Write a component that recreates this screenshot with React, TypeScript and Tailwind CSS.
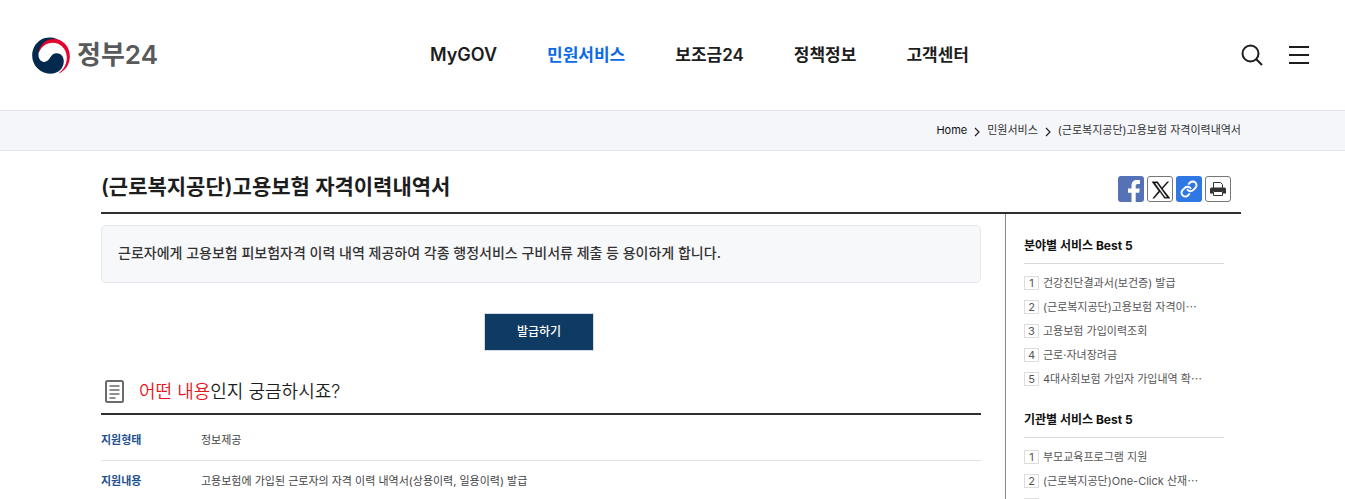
import { ReactNode } from 'react';

const navItems = [
  { label: 'MyGOV', size: 'text-[18px]', active: false },
  { label: '민원서비스', size: 'text-[17px]', active: true },
  { label: '보조금24', size: 'text-[17px]', active: false },
  { label: '정책정보', size: 'text-[17px]', active: false },
  { label: '고객센터', size: 'text-[17px]', active: false },
];

const details = [
  { term: '지원형태', text: '정보제공' },
  { term: '지원내용', text: '고용보험에 가입된 근로자의 자격 이력 내역서(상용이력, 일용이력) 발급' },
];

const fieldServices = [
  '건강진단결과서(보건증) 발급',
  '(근로복지공단)고용보험 자격이⋯',
  '고용보험 가입이력조회',
  '근로·자녀장려금',
  '4대사회보험 가입자 가입내역 확⋯',
];

const agencyServices = [
  '부모교육프로그램 지원',
  '(근로복지공단)One-Click 산재⋯',
  '(근로복지공단)고용보험 자격이⋯',
];

function Emblem() {
  return (
    <svg viewBox="0 0 112 110" className="h-[37px] w-[38px]" aria-hidden="true">
      <path
        d="M92 19C77 3 57 -2 38 3C15 10 0 31 0 55C0 85 24 109 54 109C77 109 94 94 94 72C94 57 85 48 73 48C63 48 58 54 53 62C48 71 41 75 34 74C24 72 18 63 19 50C22 31 38 13 61 10C73 9 83 12 92 19Z"
        fill="#03294f"
      />
      <path
        d="M19 48C22 24 40 6 63 6C92 6 112 29 112 57C112 81 99 100 78 109C95 96 104 78 103 59C101 34 84 17 61 17C42 17 27 29 19 48Z"
        fill="#e4032e"
      />
    </svg>
  );
}

function Chevron() {
  return (
    <svg viewBox="0 0 6 10" className="mt-[2px] h-[10px] w-[6px]" fill="none" stroke="#222" strokeWidth="1.2" aria-hidden="true">
      <path d="M1 1l4 4-4 4" />
    </svg>
  );
}

function ShareButton({ label, className, children }: { label: string; className: string; children: ReactNode }) {
  return (
    <button
      type="button"
      aria-label={label}
      className={`flex h-[26px] w-[26px] items-center justify-center overflow-hidden rounded-[3px] ${className}`}
    >
      {children}
    </button>
  );
}

function BestList({ title, items }: { title: string; items: string[] }) {
  return (
    <section>
      <h3 className="border-b border-[#d8d8d8] pb-[7px] text-[12px] leading-[20px] font-bold text-[#111]">{title}</h3>
      <ol className="mt-[7px]">
        {items.map((item, i) => (
          <li key={item} className="flex h-[24px] items-center gap-[4px] text-[11px] text-[#555]">
            <span className="flex h-[14px] w-[15px] shrink-0 items-center justify-center border border-[#ddd] leading-[12px]">
              {i + 1}
            </span>
            <a href="#" className="whitespace-nowrap">
              {item}
            </a>
          </li>
        ))}
      </ol>
    </section>
  );
}

export default function App() {
  return (
    <div className="h-screen overflow-hidden bg-white font-['Inter','Noto_Sans_CJK_KR',sans-serif] text-[#1d1d1d]">
      <header className="flex h-[110px] items-center justify-between pr-[36px] pl-[32px]">
        <a href="#" className="flex items-center gap-[7px]">
          <Emblem />
          <span className="text-[26px] leading-[36px] font-semibold text-[#58595b]">정부24</span>
        </a>
        <nav className="flex items-center gap-[50px]">
          {navItems.map((item) => (
            <a
              key={item.label}
              href="#"
              className={`leading-[26px] font-semibold ${item.size} ${item.active ? 'text-[#0b6be6]' : 'text-[#1d1d1d]'}`}
            >
              {item.label}
            </a>
          ))}
        </nav>
        <div className="flex items-center gap-[26px]">
          <button type="button" aria-label="검색">
            <svg viewBox="0 0 22 22" className="h-[22px] w-[22px]" fill="none" stroke="#1d1d1d" strokeWidth="2" aria-hidden="true">
              <circle cx="9.5" cy="9.5" r="8" />
              <path d="M15.3 15.3L21 21" />
            </svg>
          </button>
          <button type="button" aria-label="전체메뉴">
            <svg viewBox="0 0 20 20" className="h-[20px] w-[20px]" fill="#1d1d1d" aria-hidden="true">
              <path d="M0 1h20v2H0zM0 9h20v2H0zM0 17h20v2H0z" />
            </svg>
          </button>
        </div>
      </header>

      <div className="border-y border-[#e2e4ea] bg-[#f5f6fa] pr-[3px]">
        <nav className="mx-auto flex h-[39px] max-w-[1140px] items-center justify-end gap-[7px] text-[11px] text-[#333]">
          <a href="#" className="text-[#111]">
            Home
          </a>
          <Chevron />
          <a href="#">민원서비스</a>
          <Chevron />
          <span>(근로복지공단)고용보험 자격이력내역서</span>
        </nav>
      </div>

      <div className="pr-[3px]">
        <div className="mx-auto max-w-[1140px]">
          <div className="flex h-[63px] items-center justify-between border-b-2 border-[#2f2f33] pt-[10px] pr-[10px]">
            <h1 className="text-[21px] leading-[30px] font-semibold">(근로복지공단)고용보험 자격이력내역서</h1>
            <div className="flex gap-[3px] pt-[5px]">
              <ShareButton label="페이스북" className="bg-[#5472b5]">
                <svg viewBox="0 0 26 26" className="h-[26px] w-[26px]" fill="#fff" aria-hidden="true">
                  <path d="M13.5 26v-9.2H10v-4.2h3.5V9.8c0-3.9 2.2-5.8 5.4-5.8h3v4h-2c-1.6 0-2.2.7-2.2 2.1v2.5h4.1l-.6 4.2h-3.5V26z" />
                </svg>
              </ShareButton>
              <ShareButton label="X" className="border border-[#777] bg-white">
                <svg viewBox="0 0 24 24" className="mt-[2px] ml-[2px] h-[18px] w-[18px]" fill="#111" aria-hidden="true">
                  <path d="M14.1 10.3L22.3 1h-2l-7.1 8.1L7.5 1H0l9 12.2L1 23h2l7.5-8.6L16.5 23H24zm-2.700 3l-.9-1.200L3.700 2.500h2.900l5.600 7.800.9 1.200 7.300 10.100h-3z" stroke="#111" strokeWidth="0.5" />
                </svg>
              </ShareButton>
              <ShareButton label="링크 복사" className="bg-[#2f78e4]">
                <svg
                  viewBox="0 0 24 24"
                  className="h-[18px] w-[18px]"
                  fill="none"
                  stroke="#fff"
                  strokeWidth="2.7"
                  strokeLinecap="round"
                  aria-hidden="true"
                >
                  <path d="M10 13a5 5 0 0 0 7.540.540l3-3a5 5 0 0 0-7.070-7.070l-1.720 1.710" />
                  <path d="M14 11a5 5 0 0 0-7.540-.540l-3 3a5 5 0 0 0 7.070 7.070l1.710-1.710" />
                </svg>
              </ShareButton>
              <ShareButton label="인쇄" className="border border-[#777] bg-white">
                <svg viewBox="0 0 16 16" className="h-[16px] w-[16px]" aria-hidden="true">
                  <path d="M3.500 7V1.500h7l2 2V7" fill="#fff" stroke="#333" />
                  <path d="M1.500 6.500h13A1.500 1.500 0 0 1 16 8v4.500h-3V10H3v2.500H0V8a1.500 1.500 0 0 1 1.500-1.500z" fill="#333" />
                  <path d="M3.500 10.500h9v4h-9z" fill="#fff" stroke="#333" />
                </svg>
              </ShareButton>
            </div>
          </div>

          <div className="flex">
            <main className="min-w-0 flex-1 pt-[11px] pr-[24px]">
              <p className="rounded-[5px] border border-[#e4e7eb] bg-[#f7f8fa] px-[16px] pt-[16px] pb-[18px] text-[14px] leading-[22px] font-medium text-[#333]">
                근로자에게 고용보험 피보험자격 이력 내역 제공하여 각종 행정서비스 구비서류 제출 등 용이하게 합니다.
              </p>
              <div className="mt-[30px] flex justify-center pr-[4px]">
                <button
                  type="button"
                  className="h-[38px] w-[110px] border border-[#d5dce3] bg-[#0f3a63] text-[12px] font-medium text-white"
                >
                  발급하기
                </button>
              </div>

              <h2 className="mt-[26px] flex items-center gap-[15px] border-b-2 border-[#2f2f33] pb-[8px] pl-[4px] text-[18px] leading-[28px]">
                <svg viewBox="0 0 19 23" className="h-[23px] w-[19px]" fill="none" stroke="#6b6b6b" strokeWidth="2" aria-hidden="true">
                  <rect x="1" y="1" width="17" height="21" rx="1.5" />
                  <path d="M4.500 6h10M4.500 10h10M4.500 14h10M4.500 18h6" strokeWidth="1.5" />
                </svg>
                <span className="pt-[2px] leading-[26px] font-[350]">
                  <span className="text-[#e8141c]">어떤 내용</span>인지 궁금하시죠?
                </span>
              </h2>
              <dl className="pt-[5px] text-[11px]">
                {details.map((row) => (
                  <div key={row.term} className="flex h-[41px] items-center border-b border-[#e0e0e0]">
                    <dt className="w-[100px] shrink-0 font-semibold text-[#22508f]">{row.term}</dt>
                    <dd className="text-[#444]">{row.text}</dd>
                  </div>
                ))}
              </dl>
            </main>

            <aside className="flex w-[236px] shrink-0 flex-col gap-[19px] border-l border-[#8a8a8a] pt-[22px] pr-[17px] pl-[18px]">
              <BestList title="분야별 서비스 Best 5" items={fieldServices} />
              <BestList title="기관별 서비스 Best 5" items={agencyServices} />
            </aside>
          </div>
        </div>
      </div>
    </div>
  );
}
